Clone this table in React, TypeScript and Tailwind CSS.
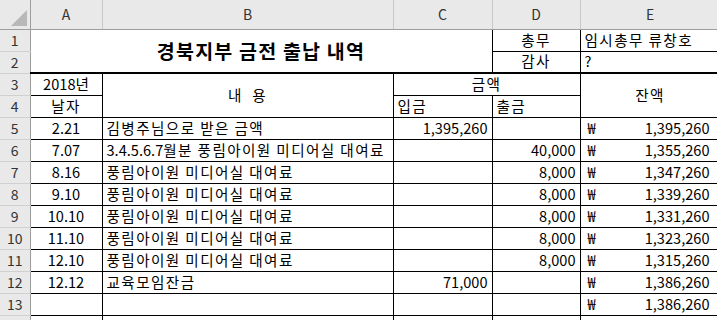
import React from "react";

const rows = [
  { n: 5, date: "2.21", desc: "김병주님으로 받은 금액", inc: "1,395,260", out: "", bal: "1,395,260" },
  { n: 6, date: "7.07", desc: "3.4.5.6.7월분 풍림아이원 미디어실 대여료", inc: "", out: "40,000", bal: "1,355,260" },
  { n: 7, date: "8.16", desc: "풍림아이원 미디어실 대여료", inc: "", out: "8,000", bal: "1,347,260" },
  { n: 8, date: "9.10", desc: "풍림아이원 미디어실 대여료", inc: "", out: "8,000", bal: "1,339,260" },
  { n: 9, date: "10.10", desc: "풍림아이원 미디어실 대여료", inc: "", out: "8,000", bal: "1,331,260" },
  { n: 10, date: "11.10", desc: "풍림아이원 미디어실 대여료", inc: "", out: "8,000", bal: "1,323,260" },
  { n: 11, date: "12.10", desc: "풍림아이원 미디어실 대여료", inc: "", out: "8,000", bal: "1,315,260" },
  { n: 12, date: "12.12", desc: "교육모임잔금", inc: "71,000", out: "", bal: "1,386,260" },
  { n: 13, date: "", desc: "", inc: "", out: "", bal: "1,386,260" },
];

const font = { fontFamily: '"Noto Sans CJK KR", "Noto Sans", sans-serif' };

function RowHead({ n }: { n?: number }) {
  return (
    <td className="bg-[#e9e9e9] text-[#333] text-[14px] text-center border-r border-r-[#9e9e9e] border-b border-b-[#d0d0d0] p-0">
      {n}
    </td>
  );
}

// hangul in the sheet is set wider than the digits, so only the hangul runs get tracking
function Ko({ text }: { text: string }) {
  const parts = text.split(/([가-힣][가-힣 ]*)/).filter(Boolean);
  return (
    <>
      {parts.map((p, i) =>
        /[가-힣]/.test(p) ? (
          <span key={i} className="tracking-[1.4px]">
            {p}
          </span>
        ) : (
          <span key={i}>{p}</span>
        )
      )}
    </>
  );
}

const cell = "border border-black px-[4px] p-0 leading-none whitespace-nowrap";
const ko = "tracking-[1.4px]";

export default function App() {
  return (
    <div className="w-[717px] h-[320px] overflow-hidden bg-white text-black" style={font}>
      <table className="table-fixed border-collapse w-[720px] text-[14.6px]">
        <colgroup>
          <col className="w-[30px]" />
          <col className="w-[72px]" />
          <col className="w-[291px]" />
          <col className="w-[99px]" />
          <col className="w-[88px]" />
          <col className="w-[140px]" />
        </colgroup>
        <tbody>
          <tr className="h-[29px]">
            <td className="relative bg-[#e9e9e9] border-r border-r-[#9e9e9e] border-b border-b-[#9e9e9e] p-0">
              <svg className="absolute right-[3px] bottom-[3px]" width="16" height="16" viewBox="0 0 16 16">
                <polygon points="16,0 16,16 0,16" fill="#b8b8b8" />
              </svg>
            </td>
            {["A", "B", "C", "D", "E"].map((c) => (
              <td
                key={c}
                className="bg-[#e9e9e9] text-[#333] text-[14px] text-center border-r border-r-[#c8c8c8] border-b border-b-[#9e9e9e] p-0"
              >
                {c}
              </td>
            ))}
          </tr>

          <tr className="h-[22px]">
            <RowHead n={1} />
            <td
              colSpan={3}
              rowSpan={2}
              className="text-center font-bold text-[19.5px] border-b-2 border-b-black border-r border-r-black p-0 tracking-[1.2px]"
            >
              경북지부 금전 출납 내역
            </td>
            <td className={`${cell} ${ko} text-center`}>총무</td>
            <td className={`${cell} ${ko} text-left`}>임시총무 류창호</td>
          </tr>
          <tr className="h-[22px]">
            <RowHead n={2} />
            <td className={`${cell} ${ko} text-center border-b-2`}>감사</td>
            <td className={`${cell} text-left border-b-2`}>?</td>
          </tr>

          <tr className="h-[22px]">
            <RowHead n={3} />
            <td className={`${cell} text-center`}>2018년</td>
            <td rowSpan={2} className={`${cell} ${ko} text-center`}>
              내&nbsp;&nbsp;용
            </td>
            <td colSpan={2} className={`${cell} ${ko} text-center`}>
              금액
            </td>
            <td rowSpan={2} className={`${cell} ${ko} text-center`}>
              잔액
            </td>
          </tr>
          <tr className="h-[22px]">
            <RowHead n={4} />
            <td className={`${cell} ${ko} text-center`}>날자</td>
            <td className={`${cell} ${ko} text-left`}>입금</td>
            <td className={`${cell} ${ko} text-left`}>출금</td>
          </tr>

          {rows.map((r) => (
            <tr key={r.n} className="h-[22px]">
              <RowHead n={r.n} />
              <td className={`${cell} text-center`}>{r.date}</td>
              <td className={`${cell} text-left`}>
                <Ko text={r.desc} />
              </td>
              <td className={`${cell} text-right`}>{r.inc}</td>
              <td className={`${cell} text-right`}>{r.out}</td>
              <td className={`${cell} pl-[7px] pr-[10px]`}>
                <div className="flex justify-between">
                  <span>₩</span>
                  <span>{r.bal}</span>
                </div>
              </td>
            </tr>
          ))}

          <tr className="h-[22px]">
            <RowHead />
            <td className={cell}></td>
            <td className={cell}></td>
            <td className={cell}></td>
            <td className={cell}></td>
            <td className={cell}></td>
          </tr>
        </tbody>
      </table>
    </div>
  );
}
